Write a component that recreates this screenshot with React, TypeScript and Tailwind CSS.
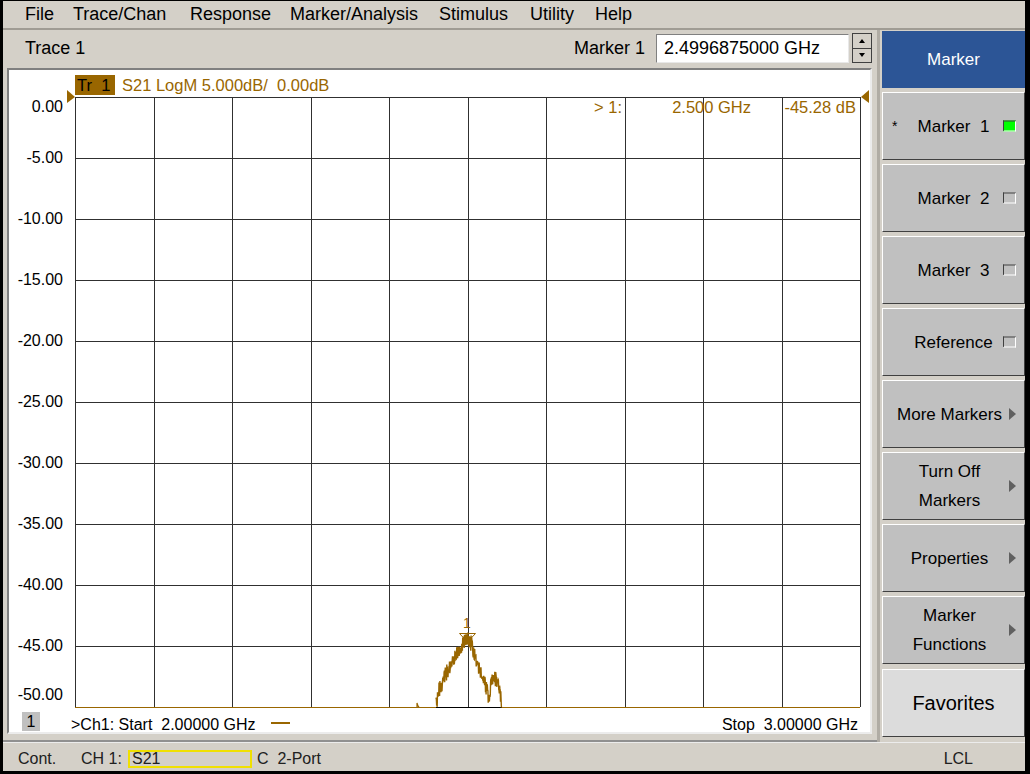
import React from "react";

const brown = "#996600";
const menu = ["File", "Trace/Chan", "Response", "Marker/Analysis", "Stimulus", "Utility", "Help"];
const menuW = ["w-[48px]", "w-[117px]", "w-[100px]", "w-[149px]", "w-[91px]", "w-[65px]", "w-[60px]"];
const yLabels = ["0.00", "-5.00", "-10.00", "-15.00", "-20.00", "-25.00", "-30.00", "-35.00", "-40.00", "-45.00", "-50.00"];

// plot area inside the white panel
const GX = 66;
const GY = 27;
const GW = 785;
const GH = 610;

const envPts: [number, number][] = [
  [437, 707], [440, 690], [445, 678], [450, 668], [455, 658], [460, 650], [465, 642],
  [468, 638], [472, 643], [476, 655], [480, 668], [484, 680], [488, 690], [490, 704],
  [492, 684], [495, 677], [498, 680], [501, 690], [503, 707],
];

function env(x: number) {
  for (let i = 0; i < envPts.length - 1; i++) {
    const [x0, y0] = envPts[i];
    const [x1, y1] = envPts[i + 1];
    if (x >= x0 && x <= x1) return y0 + ((x - x0) / (x1 - x0)) * (y1 - y0);
  }
  return 707;
}

function tracePath() {
  let s = 12345;
  const r = () => {
    s = (s * 1664525 + 1013904223) >>> 0;
    return s / 4294967296;
  };
  const pts: string[] = [];
  for (let x = 437; x <= 503; x += 0.3) {
    let y = env(x) + (r() - 0.5) * 16;
    if (y > 707) y = 707;
    pts.push(`${(x - 10).toFixed(1)},${(y - 70).toFixed(1)}`);
  }
  return "M" + pts.join(" L");
}

const Indicator = ({ on }: { on?: boolean }) => (
  <span
    className={`block w-[13px] h-[11px] border border-t-[#404040] border-l-[#404040] border-b-white border-r-white ${
      on ? "bg-[#00ff00]" : "bg-[#c0c0c0]"
    }`}
  />
);

const Arrow = () => (
  <span className="block w-0 h-0 border-y-[6px] border-y-transparent border-l-[7px] border-l-[#606060]" />
);

const SoftKey = ({
  children,
  right,
  left,
  arrow,
}: {
  children: React.ReactNode;
  right?: React.ReactNode;
  left?: React.ReactNode;
  arrow?: boolean;
}) => (
  <div
    className={`relative h-[68px] flex items-center justify-center border border-t-white border-l-white border-r-[#404040] border-b-[#404040] bg-[#c0c0c0] ${
      arrow ? "pr-[8px]" : ""
    }`}
  >
    {left && <span className="absolute left-[9px] top-[23px] text-[14px]">{left}</span>}
    <div className="text-center leading-[29px] whitespace-nowrap">{children}</div>
    {right && <span className="absolute right-[8px] top-1/2 -translate-y-1/2">{right}</span>}
  </div>
);

export default function App() {
  const vLines = Array.from({ length: 11 }, (_, i) => GX + Math.round(i * 78.5));
  const hLines = Array.from({ length: 11 }, (_, i) => GY + i * 61);

  return (
    <div
      className="w-[1030px] h-[774px] bg-black pt-px pl-[3px] pr-[5px] pb-[3px] overflow-hidden text-black"
      style={{ fontFamily: '"Liberation Sans", Arial, sans-serif' }}
    >
      <div className="h-full bg-[#d4d0c8] flex flex-col">
        {/* menu */}
        <div className="h-[29px] flex items-center pl-[22px] text-[18px] border-b-2 border-b-[#a09c94]">
          {menu.map((m, i) => (
            <span key={m} className={menuW[i]}>
              {m}
            </span>
          ))}
        </div>

        <div className="h-[714px] flex">
          {/* left column */}
          <div className="w-[874px] shrink-0 flex flex-col">
            <div className="h-[36px] flex items-center pl-[22px] pr-[5px] text-[18px]">
              <span>Trace 1</span>
              <span className="ml-auto mr-[11px]">Marker 1</span>
              <div className="w-[193px] h-[29px] bg-white border border-t-[#808080] border-l-[#808080] border-b-[#e8e8e8] border-r-[#e8e8e8] pl-[7px] flex items-center">
                2.4996875000 GHz
              </div>
              <div className="ml-[3px] w-[20px] h-[30px] flex flex-col border border-[#404040]">
                <div className="flex-1 bg-[#d4d0c8] border-b border-b-[#404040] flex items-center justify-center">
                  <span className="w-0 h-0 border-x-[3px] border-x-transparent border-b-[4px] border-b-black" />
                </div>
                <div className="flex-1 bg-[#d4d0c8] flex items-center justify-center">
                  <span className="w-0 h-0 border-x-[3px] border-x-transparent border-t-[4px] border-t-black" />
                </div>
              </div>
            </div>

            {/* chart frame */}
            <div className="flex-1 pl-[4px] pt-[2px] pr-[5px] pb-[6px] border-b-2 border-b-[#909090]">
              <div className="h-full border-2 border-t-[#808080] border-l-[#808080] border-b-[#ececec] border-r-[#ececec]">
                <div className="relative h-full bg-white text-[16px]">
                  <svg className="absolute inset-0" width="860" height="666">
                    {vLines.map((x) => (
                      <line key={"v" + x} x1={x + 0.5} y1={GY} x2={x + 0.5} y2={GY + GH} stroke="#303030" strokeWidth="1" />
                    ))}
                    {hLines.slice(0, 10).map((y) => (
                      <line key={"h" + y} x1={GX} y1={y + 0.5} x2={GX + GW} y2={y + 0.5} stroke="#303030" strokeWidth="1" />
                    ))}
                    <line x1={GX} y1={GY + GH + 0.5} x2={GX + GW} y2={GY + GH + 0.5} stroke={brown} strokeWidth="1" />
                    <line x1={427} y1={GY + GH + 0.5} x2={493} y2={GY + GH + 0.5} stroke="#000" strokeWidth="1" />
                    {/* reference triangles */}
                    <polygon points="58,20 66,27 58,33" fill={brown} />
                    <polygon points="860,20 852,27 860,33" fill={brown} />
                    {/* trace */}
                    <path d="M408,637 L408,633 L409,636 L410,637" stroke={brown} fill="none" strokeWidth="1.2" />
                    <path d={tracePath()} stroke={brown} fill="none" strokeWidth="1.4" />
                    {/* marker */}
                    <polygon points="450.5,563.5 466.5,563.5 458.5,572" stroke={brown} fill="none" strokeWidth="1" />
                    <text x="458" y="558" fill={brown} fontSize="14" textAnchor="middle">
                      1
                    </text>
                  </svg>

                  {/* trace label */}
                  <div className="absolute left-[66px] top-[5px] w-[40px] h-[20px] bg-[#996600] pl-[2px] leading-[20px] text-[16.5px]">
                    Tr&nbsp;&nbsp;1
                  </div>
                  <div className="absolute left-[113px] top-[5px] leading-[20px] text-[16.5px] text-[#996600] whitespace-pre">
                    S21 LogM 5.000dB/  0.00dB
                  </div>

                  {/* marker readout */}
                  <div className="absolute top-[27px] left-[500px] w-[113px] text-right leading-[20px] text-[16.5px] text-[#996600]">
                    &gt; 1:
                  </div>
                  <div className="absolute top-[27px] left-[620px] w-[122px] text-right leading-[20px] text-[16.5px] text-[#996600]">
                    2.500 GHz
                  </div>
                  <div className="absolute top-[27px] left-[740px] w-[107px] text-right leading-[20px] text-[16.5px] text-[#996600]">
                    -45.28 dB
                  </div>

                  {/* y labels */}
                  {yLabels.map((l, i) => {
                    let cy = GY + i * 61;
                    if (i === 0) cy = 37;
                    if (i === 10) cy = 625;
                    return (
                      <div
                        key={l}
                        className="absolute left-0 w-[54px] text-right leading-[20px]"
                        style={{ top: cy - 10 }}
                      >
                        {l}
                      </div>
                    );
                  })}

                  {/* bottom line */}
                  <div className="absolute left-[13px] top-[642px] w-[18px] h-[19px] bg-[#c0c0c0] text-center leading-[19px]">
                    1
                  </div>
                  <div className="absolute left-[62px] top-[645px] leading-[20px] whitespace-pre">
                    &gt;Ch1: Start  2.00000 GHz
                  </div>
                  <div className="absolute left-[262px] top-[652px] w-[19px] h-[2px] bg-[#996600]" />
                  <div className="absolute right-[12px] top-[645px] leading-[20px] whitespace-pre">
                    Stop  3.00000 GHz
                  </div>
                </div>
              </div>
            </div>
          </div>

          {/* right soft keys */}
          <div className="flex-1 min-w-0 border-l-[3px] border-l-[#b0aca4] pl-[2px] pt-px flex flex-col gap-[4px] text-[17px]">
            <div className="h-[57px] bg-[#2c5596] text-white flex items-center justify-center">Marker</div>
            <SoftKey left="*" right={<Indicator on />}>
              Marker&nbsp;&nbsp;1
            </SoftKey>
            <SoftKey right={<Indicator />}>Marker&nbsp;&nbsp;2</SoftKey>
            <SoftKey right={<Indicator />}>Marker&nbsp;&nbsp;3</SoftKey>
            <SoftKey right={<Indicator />}>Reference</SoftKey>
            <SoftKey arrow right={<Arrow />}>
              More Markers
            </SoftKey>
            <SoftKey arrow right={<Arrow />}>
              Turn Off
              <br />
              Markers
            </SoftKey>
            <SoftKey arrow right={<Arrow />}>
              Properties
            </SoftKey>
            <SoftKey arrow right={<Arrow />}>
              Marker
              <br />
              Functions
            </SoftKey>
            <div className="mt-px h-[68px] flex items-center justify-center bg-[#dcdcdc] border border-t-white border-l-white border-r-[#404040] border-b-[#404040] text-[20px]">
              Favorites
            </div>
          </div>
        </div>

        {/* status bar */}
        <div className="flex-1 flex items-center pt-[4px] text-[16px] text-[#202020] border-t border-t-[#ececec]">
          <span className="ml-[15px] w-[63px]">Cont.</span>
          <span className="w-[47px]">CH 1:</span>
          <span className="w-[124px] h-[18px] border-2 border-[#f0e000] leading-[14px] pl-[2px]">S21</span>
          <span className="ml-[5px] whitespace-pre">C  2-Port</span>
          <span className="ml-auto mr-[52px]">LCL</span>
        </div>
      </div>
    </div>
  );
}
